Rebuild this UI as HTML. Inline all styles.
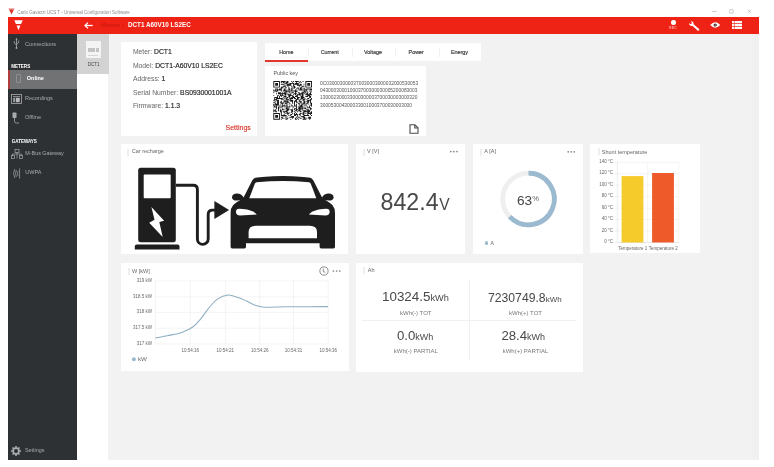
<!DOCTYPE html>
<html><head><meta charset="utf-8">
<style>
*{margin:0;padding:0;box-sizing:border-box}
html,body{width:774px;height:467px;overflow:hidden;background:#fff;font-family:"Liberation Sans",sans-serif}
body{filter:blur(0.25px)}
.a{position:absolute}
.t{position:absolute;white-space:nowrap;line-height:1}
#hdr{left:8px;top:17px;width:751px;height:17px;background:#ee2215}
#side{left:8px;top:34px;width:69px;height:426px;background:#2e3134}
#main{left:108px;top:34px;width:651px;height:426px;background:#f2f2f2}
.card{position:absolute;background:#fff}
.st{color:#a9abad}
.hd{color:#fff;font-weight:bold}
.ttl{font-size:5.5px;color:#666}
.bar{position:absolute;width:2px;height:7px;background:#eeeeee}
.mi{font-size:6.8px;color:#666}
.mi b{color:#1e1e1e;font-weight:normal;-webkit-text-stroke:0.15px #1e1e1e}
.tab{top:50px;width:43.3px;text-align:center;font-size:5.4px;color:#333;-webkit-text-stroke:0.15px #333}
.hex{font-size:5.6px;line-height:7.1px;color:#555;white-space:nowrap;transform:scaleX(0.87);transform-origin:0 0}
.dots{font-size:4.5px;color:#777;letter-spacing:-0.2px}
.big{color:#484848}
.lbl{font-size:6px;color:#777;width:112px;text-align:center}
.ax{font-size:4.5px;color:#666}
</style></head><body>
<!-- title bar -->
<svg class="a" style="left:8px;top:8px" width="7" height="7" viewBox="0 0 7 7"><path d="M0.5 0.5H6.5L3.5 6.5Z" fill="#d9362b"/><path d="M1 1H6" stroke="#fff" stroke-width="0.6"/></svg>
<div class="t" style="left:17.2px;top:10.6px;font-size:4.5px;color:#8c8c8c">Carlo Gavazzi UCS T - Universal Configuration Software</div>
<svg class="a" style="left:0;top:0" width="774" height="17" viewBox="0 0 774 17" fill="none" stroke="#a8a8a8" stroke-width="0.6"><path d="M712.3 11.5H716.7"/><rect x="729.6" y="9.6" width="3.6" height="3.6" rx="0.8"/><path d="M747.8 9.6L751.2 13M751.2 9.6L747.8 13"/></svg>
<div id="hdr" class="a"></div>
<div id="side" class="a"></div>
<div id="main" class="a"></div>
<div class="a" style="left:752.5px;top:34px;width:6.4px;height:426px;background:#f0f0f0"></div>


<!-- header content -->
<svg class="a" style="left:13.5px;top:19.8px" width="9" height="11" viewBox="0 0 9 11"><path d="M0.3 0.3H8.7L7.1 3.9H1.9Z" fill="#fff"/><path d="M2.6 5.6H6.4L4.5 10.3Z" fill="#fff"/></svg>
<svg class="a" style="left:83.5px;top:22px" width="9" height="7" viewBox="0 0 9 7" fill="none" stroke="#fff" stroke-width="1.3"><path d="M8.7 3.5H1.2"/><path d="M4 0.6L1 3.5L4 6.4"/></svg>
<div class="t" style="left:101px;top:22.3px;font-size:6.2px;color:#c4170f">Meters</div>
<div class="t" style="left:122.5px;top:22.3px;font-size:6.2px;color:#c4170f">/</div>
<div class="t hd" style="left:128px;top:22.3px;font-size:6.3px">DCT1 A60V10 LS2EC</div>
<div class="a" style="left:671.2px;top:20.4px;width:4.4px;height:4.4px;border-radius:50%;background:#fff"></div>
<div class="t" style="left:669px;top:26.9px;font-size:3.5px;color:#f7a49d;font-weight:bold;letter-spacing:0.15px">REC</div>
<svg class="a" style="left:688px;top:20.5px" width="12" height="10" viewBox="0 0 12 10"><path d="M1.2 1.6Q0.6 3.6 2.2 4.6Q3.2 5.1 4.3 4.7L9.6 9.4Q10.6 10 11.2 9.2Q11.6 8.4 10.8 7.8L5.6 3.3Q5.9 1.8 4.8 0.8Q3.8 0.1 2.6 0.3L3.9 1.8L3.2 3L1.9 2.9Z" fill="#fff"/></svg>
<svg class="a" style="left:710px;top:22.3px" width="10.4" height="6" viewBox="0 0 10.4 6"><path d="M0.2 3Q5.2 -2.4 10.2 3Q5.2 8.4 0.2 3Z" fill="#fff"/><circle cx="5.2" cy="3" r="1.6" fill="#3a1a17"/><circle cx="5.2" cy="3" r="0.6" fill="#fff"/></svg>
<svg class="a" style="left:731.8px;top:20.8px" width="10.6" height="8.4" viewBox="0 0 10.6 8.4" fill="#fff"><rect x="0" y="0" width="1.9" height="2.3"/><rect x="2.5" y="0" width="8.1" height="2.3"/><rect x="0" y="3" width="1.9" height="2.3"/><rect x="2.5" y="3" width="8.1" height="2.3"/><rect x="0" y="6" width="1.9" height="2.4"/><rect x="2.5" y="6" width="8.1" height="2.4"/></svg>
<!-- sidebar -->
<svg class="a" style="left:12px;top:38px" width="9" height="11" viewBox="0 0 9 11" fill="none" stroke="#a9abad" stroke-width="0.8"><path d="M4.5 1V10"/><path d="M2.3 3.2V5.2L4.5 7"/><path d="M6.7 2.5V4.6L4.5 6.2"/><circle cx="4.5" cy="10" r="0.7" fill="#a9abad"/><path d="M3.9 1.3L4.5 0.5L5.1 1.3Z" fill="#a9abad"/></svg>
<div class="t st" style="left:25px;top:41.6px;font-size:5.6px">Connections</div>
<div class="t hd" style="left:11.3px;top:65.4px;font-size:4.6px;letter-spacing:-0.05px">METERS</div>
<div class="a" style="left:8px;top:69.5px;width:69px;height:19.5px;background:#717273"></div>
<div class="a" style="left:8px;top:69.5px;width:1.7px;height:19.5px;background:#b03a3c"></div>
<div class="a" style="left:15.7px;top:74.4px;width:5.3px;height:9px;border:0.7px solid #8e8f91;border-radius:1px"></div>
<div class="t hd" style="left:26.8px;top:76.3px;font-size:5.5px">Online</div>
<svg class="a" style="left:11px;top:94px" width="11" height="10" viewBox="0 0 11 10" fill="none" stroke="#a9abad" stroke-width="0.8"><rect x="0.5" y="0.5" width="10" height="9"/><path d="M2 2.6H9"/><rect x="2.3" y="3.8" width="1.6" height="4.4" fill="#a9abad" stroke="none"/><rect x="4.8" y="3.8" width="3.9" height="4.4" fill="#b8babc" stroke="none"/></svg>
<div class="t st" style="left:25px;top:95.6px;font-size:5.5px">Recordings</div>
<svg class="a" style="left:11.4px;top:112.3px" width="9" height="12" viewBox="0 0 9 12" fill="#a9abad"><rect x="1.5" y="0.5" width="4" height="5.5" rx="0.8"/><path d="M3.5 6V9.5Q3.5 11 5.5 11H8" fill="none" stroke="#a9abad" stroke-width="0.8"/></svg>
<div class="t st" style="left:25px;top:115px;font-size:5.6px">Offline</div>
<div class="t hd" style="left:11.8px;top:140px;font-size:4.6px;letter-spacing:-0.08px">GATEWAYS</div>
<svg class="a" style="left:10.5px;top:148.5px" width="12" height="10" viewBox="0 0 12 10" fill="none" stroke="#a9abad" stroke-width="0.7"><rect x="4" y="0.5" width="4" height="3"/><path d="M6 3.5V5M1.5 6.5V5H10.5V6.5"/><rect x="0.5" y="6.5" width="3" height="3"/><rect x="8.5" y="6.5" width="3" height="3"/><path d="M6 5V9.5"/></svg>
<div class="t st" style="left:25.3px;top:150.6px;font-size:5.4px">M-Bus Gateway</div>
<svg class="a" style="left:12px;top:167.5px" width="9" height="11" viewBox="0 0 9 11" fill="none" stroke="#a9abad" stroke-width="0.7"><path d="M7.6 0.5V10.5"/><path d="M6 3.2Q4.9 5.5 6 7.8"/><path d="M4.4 2Q2.6 5.5 4.4 9"/><path d="M2.8 1Q0.2 5.5 2.8 10"/></svg>
<div class="t st" style="left:25.3px;top:170px;font-size:5.5px">UWPA</div>
<svg class="a" style="left:11.3px;top:445.8px" width="10" height="10" viewBox="0 0 10 10"><g fill="#a9abad"><circle cx="5" cy="5" r="3.7"/><rect x="4.25" y="0" width="1.5" height="2" transform="rotate(0 5 5)"/><rect x="4.25" y="0" width="1.5" height="2" transform="rotate(45 5 5)"/><rect x="4.25" y="0" width="1.5" height="2" transform="rotate(90 5 5)"/><rect x="4.25" y="0" width="1.5" height="2" transform="rotate(135 5 5)"/><rect x="4.25" y="0" width="1.5" height="2" transform="rotate(180 5 5)"/><rect x="4.25" y="0" width="1.5" height="2" transform="rotate(225 5 5)"/><rect x="4.25" y="0" width="1.5" height="2" transform="rotate(270 5 5)"/><rect x="4.25" y="0" width="1.5" height="2" transform="rotate(315 5 5)"/></g><circle cx="5" cy="5" r="2.1" fill="#2e3134"/></svg>
<div class="t st" style="left:25px;top:448px;font-size:5.4px">Settings</div>
<!-- dct tile -->
<div class="a" style="left:77px;top:34px;width:31.5px;height:40px;background:#d3d3d3"></div>
<div class="a" style="left:85.5px;top:41.2px;width:15.5px;height:16.8px;background:#f4f4f4"></div>
<div class="a" style="left:87.5px;top:48px;width:7px;height:4px;background:#c3c3c3"></div>
<div class="a" style="left:95.5px;top:48px;width:3.5px;height:4px;background:#c3c3c3"></div>
<div class="a" style="left:88px;top:55px;width:10px;height:0.6px;background:#d6d6d6"></div>
<div class="t" style="left:87.8px;top:62.6px;font-size:4.5px;color:#444">DCT1</div>

<!-- meter card -->
<div class="card" style="left:120.6px;top:42.2px;width:136.7px;height:93.6px"></div>
<div class="t mi" style="left:132.9px;top:48.9px">Meter: <b>DCT1</b></div>
<div class="t mi" style="left:132.9px;top:62.5px">Model: <b>DCT1-A60V10 LS2EC</b></div>
<div class="t mi" style="left:132.9px;top:76.2px">Address: <b>1</b></div>
<div class="t mi" style="left:132.9px;top:89.6px">Serial Number: <b>BS0930001001A</b></div>
<div class="t mi" style="left:132.9px;top:103.1px">Firmware: <b>1.1.3</b></div>
<div class="t" style="left:225.5px;top:124.2px;font-size:7px;color:#d8281f;-webkit-text-stroke:0.1px #d8281f">Settings</div>
<!-- tabs -->
<div class="card" style="left:264.7px;top:43.4px;width:216.5px;height:17.6px"></div>
<div class="a" style="left:265px;top:60px;width:43.4px;height:1.6px;background:#e3352c"></div>
<div class="a" style="left:308.3px;top:47.5px;width:0.6px;height:9px;background:#f1f1f1"></div>
<div class="a" style="left:351.6px;top:47.5px;width:0.6px;height:9px;background:#f1f1f1"></div>
<div class="a" style="left:395.3px;top:47.5px;width:0.6px;height:9px;background:#f1f1f1"></div>
<div class="a" style="left:438.6px;top:47.5px;width:0.6px;height:9px;background:#f1f1f1"></div>
<div class="t tab" style="left:264.7px">Home</div>
<div class="t tab" style="left:308.0px">Current</div>
<div class="t tab" style="left:351.3px">Voltage</div>
<div class="t tab" style="left:394.6px">Power</div>
<div class="t tab" style="left:437.9px">Energy</div>
<!-- public key -->
<div class="card" style="left:265.3px;top:65.7px;width:161.1px;height:69.9px"></div>
<div class="t" style="left:273.4px;top:71.2px;font-size:5.4px;color:#555">Public key</div>
<svg class="a" style="left:273px;top:81px" width="39.3" height="38.7" viewBox="0 0 41 41"><path d="M0 0h7v1h-7zM8 0h5v1h-5zM14 0h2v1h-2zM19 0h1v1h-1zM21 0h1v1h-1zM23 0h4v1h-4zM28 0h1v1h-1zM31 0h1v1h-1zM34 0h7v1h-7zM0 1h1v1h-1zM6 1h1v1h-1zM8 1h1v1h-1zM10 1h2v1h-2zM13 1h3v1h-3zM20 1h1v1h-1zM24 1h1v1h-1zM27 1h1v1h-1zM29 1h1v1h-1zM34 1h1v1h-1zM40 1h1v1h-1zM0 2h1v1h-1zM2 2h3v1h-3zM6 2h1v1h-1zM12 2h3v1h-3zM17 2h5v1h-5zM23 2h4v1h-4zM34 2h1v1h-1zM36 2h3v1h-3zM40 2h1v1h-1zM0 3h1v1h-1zM2 3h3v1h-3zM6 3h1v1h-1zM8 3h4v1h-4zM14 3h5v1h-5zM21 3h6v1h-6zM28 3h2v1h-2zM32 3h1v1h-1zM34 3h1v1h-1zM36 3h3v1h-3zM40 3h1v1h-1zM0 4h1v1h-1zM2 4h3v1h-3zM6 4h1v1h-1zM12 4h1v1h-1zM14 4h5v1h-5zM21 4h1v1h-1zM25 4h5v1h-5zM34 4h1v1h-1zM36 4h3v1h-3zM40 4h1v1h-1zM0 5h1v1h-1zM6 5h1v1h-1zM10 5h3v1h-3zM15 5h1v1h-1zM19 5h1v1h-1zM21 5h2v1h-2zM27 5h1v1h-1zM30 5h3v1h-3zM34 5h1v1h-1zM40 5h1v1h-1zM0 6h7v1h-7zM8 6h3v1h-3zM12 6h2v1h-2zM16 6h1v1h-1zM20 6h1v1h-1zM22 6h2v1h-2zM29 6h1v1h-1zM34 6h7v1h-7zM8 7h2v1h-2zM13 7h1v1h-1zM16 7h1v1h-1zM19 7h1v1h-1zM21 7h2v1h-2zM25 7h2v1h-2zM28 7h3v1h-3zM32 7h1v1h-1zM2 8h3v1h-3zM6 8h3v1h-3zM11 8h2v1h-2zM16 8h2v1h-2zM19 8h2v1h-2zM24 8h1v1h-1zM26 8h1v1h-1zM28 8h2v1h-2zM32 8h2v1h-2zM35 8h6v1h-6zM0 9h1v1h-1zM2 9h1v1h-1zM4 9h5v1h-5zM11 9h2v1h-2zM14 9h1v1h-1zM16 9h2v1h-2zM19 9h1v1h-1zM23 9h1v1h-1zM27 9h5v1h-5zM33 9h3v1h-3zM39 9h2v1h-2zM0 10h5v1h-5zM8 10h1v1h-1zM10 10h5v1h-5zM16 10h1v1h-1zM18 10h8v1h-8zM32 10h2v1h-2zM35 10h1v1h-1zM38 10h1v1h-1zM3 11h1v1h-1zM13 11h5v1h-5zM23 11h2v1h-2zM30 11h1v1h-1zM32 11h3v1h-3zM36 11h1v1h-1zM39 11h2v1h-2zM0 12h1v1h-1zM5 12h3v1h-3zM9 12h1v1h-1zM11 12h3v1h-3zM17 12h1v1h-1zM19 12h3v1h-3zM23 12h1v1h-1zM26 12h2v1h-2zM30 12h3v1h-3zM34 12h1v1h-1zM36 12h1v1h-1zM39 12h1v1h-1zM3 13h1v1h-1zM5 13h9v1h-9zM15 13h1v1h-1zM18 13h1v1h-1zM22 13h3v1h-3zM27 13h5v1h-5zM33 13h1v1h-1zM35 13h2v1h-2zM38 13h2v1h-2zM7 14h1v1h-1zM9 14h1v1h-1zM12 14h2v1h-2zM15 14h4v1h-4zM21 14h1v1h-1zM23 14h1v1h-1zM25 14h4v1h-4zM30 14h2v1h-2zM34 14h7v1h-7zM0 15h1v1h-1zM4 15h2v1h-2zM7 15h4v1h-4zM12 15h1v1h-1zM16 15h5v1h-5zM24 15h2v1h-2zM28 15h1v1h-1zM30 15h2v1h-2zM36 15h3v1h-3zM4 16h1v1h-1zM6 16h1v1h-1zM8 16h1v1h-1zM11 16h3v1h-3zM16 16h2v1h-2zM20 16h2v1h-2zM23 16h3v1h-3zM29 16h3v1h-3zM34 16h3v1h-3zM38 16h2v1h-2zM1 17h4v1h-4zM6 17h1v1h-1zM10 17h1v1h-1zM12 17h1v1h-1zM14 17h2v1h-2zM17 17h1v1h-1zM19 17h4v1h-4zM25 17h3v1h-3zM29 17h4v1h-4zM38 17h2v1h-2zM1 18h1v1h-1zM3 18h7v1h-7zM11 18h1v1h-1zM13 18h2v1h-2zM17 18h4v1h-4zM22 18h2v1h-2zM25 18h2v1h-2zM29 18h3v1h-3zM33 18h1v1h-1zM36 18h2v1h-2zM40 18h1v1h-1zM1 19h3v1h-3zM8 19h3v1h-3zM13 19h4v1h-4zM18 19h1v1h-1zM24 19h3v1h-3zM28 19h2v1h-2zM31 19h3v1h-3zM35 19h1v1h-1zM39 19h2v1h-2zM0 20h2v1h-2zM3 20h3v1h-3zM11 20h1v1h-1zM13 20h1v1h-1zM15 20h1v1h-1zM17 20h4v1h-4zM23 20h2v1h-2zM27 20h1v1h-1zM31 20h2v1h-2zM36 20h4v1h-4zM2 21h1v1h-1zM4 21h2v1h-2zM8 21h1v1h-1zM11 21h5v1h-5zM18 21h3v1h-3zM22 21h3v1h-3zM27 21h3v1h-3zM32 21h2v1h-2zM35 21h3v1h-3zM39 21h1v1h-1zM0 22h2v1h-2zM4 22h2v1h-2zM7 22h2v1h-2zM10 22h1v1h-1zM12 22h1v1h-1zM14 22h3v1h-3zM20 22h1v1h-1zM22 22h1v1h-1zM24 22h2v1h-2zM28 22h2v1h-2zM32 22h2v1h-2zM36 22h2v1h-2zM39 22h1v1h-1zM2 23h1v1h-1zM4 23h2v1h-2zM8 23h3v1h-3zM12 23h3v1h-3zM17 23h1v1h-1zM20 23h1v1h-1zM22 23h1v1h-1zM26 23h2v1h-2zM29 23h1v1h-1zM31 23h3v1h-3zM35 23h2v1h-2zM39 23h2v1h-2zM0 24h6v1h-6zM7 24h1v1h-1zM9 24h1v1h-1zM13 24h1v1h-1zM15 24h1v1h-1zM17 24h1v1h-1zM22 24h1v1h-1zM24 24h1v1h-1zM27 24h1v1h-1zM30 24h2v1h-2zM33 24h1v1h-1zM35 24h1v1h-1zM37 24h1v1h-1zM40 24h1v1h-1zM0 25h1v1h-1zM2 25h4v1h-4zM9 25h1v1h-1zM11 25h1v1h-1zM14 25h1v1h-1zM19 25h1v1h-1zM22 25h1v1h-1zM24 25h1v1h-1zM27 25h1v1h-1zM29 25h2v1h-2zM32 25h1v1h-1zM34 25h1v1h-1zM39 25h2v1h-2zM0 26h2v1h-2zM3 26h1v1h-1zM6 26h2v1h-2zM9 26h6v1h-6zM17 26h1v1h-1zM19 26h2v1h-2zM22 26h3v1h-3zM28 26h3v1h-3zM33 26h1v1h-1zM35 26h1v1h-1zM38 26h1v1h-1zM40 26h1v1h-1zM1 27h3v1h-3zM5 27h1v1h-1zM8 27h2v1h-2zM14 27h4v1h-4zM21 27h1v1h-1zM24 27h1v1h-1zM26 27h6v1h-6zM36 27h1v1h-1zM38 27h1v1h-1zM0 28h1v1h-1zM3 28h1v1h-1zM5 28h3v1h-3zM11 28h1v1h-1zM13 28h2v1h-2zM20 28h1v1h-1zM24 28h1v1h-1zM27 28h2v1h-2zM30 28h1v1h-1zM32 28h3v1h-3zM36 28h4v1h-4zM3 29h1v1h-1zM5 29h1v1h-1zM9 29h1v1h-1zM13 29h4v1h-4zM22 29h3v1h-3zM26 29h6v1h-6zM33 29h2v1h-2zM39 29h2v1h-2zM0 30h1v1h-1zM2 30h1v1h-1zM5 30h1v1h-1zM7 30h1v1h-1zM9 30h3v1h-3zM14 30h3v1h-3zM18 30h3v1h-3zM22 30h1v1h-1zM24 30h2v1h-2zM27 30h2v1h-2zM30 30h1v1h-1zM35 30h3v1h-3zM39 30h1v1h-1zM0 31h3v1h-3zM5 31h1v1h-1zM7 31h2v1h-2zM13 31h3v1h-3zM19 31h2v1h-2zM23 31h2v1h-2zM26 31h3v1h-3zM31 31h4v1h-4zM36 31h3v1h-3zM0 32h1v1h-1zM2 32h2v1h-2zM7 32h2v1h-2zM10 32h5v1h-5zM19 32h2v1h-2zM22 32h1v1h-1zM25 32h1v1h-1zM28 32h2v1h-2zM32 32h7v1h-7zM40 32h1v1h-1zM8 33h1v1h-1zM11 33h1v1h-1zM14 33h2v1h-2zM17 33h1v1h-1zM19 33h1v1h-1zM23 33h1v1h-1zM31 33h2v1h-2zM36 33h2v1h-2zM39 33h2v1h-2zM0 34h7v1h-7zM8 34h1v1h-1zM12 34h1v1h-1zM14 34h3v1h-3zM20 34h1v1h-1zM22 34h1v1h-1zM24 34h1v1h-1zM28 34h2v1h-2zM31 34h2v1h-2zM34 34h1v1h-1zM36 34h5v1h-5zM0 35h1v1h-1zM6 35h1v1h-1zM8 35h1v1h-1zM11 35h1v1h-1zM15 35h1v1h-1zM18 35h2v1h-2zM22 35h4v1h-4zM27 35h2v1h-2zM31 35h2v1h-2zM36 35h1v1h-1zM39 35h1v1h-1zM0 36h1v1h-1zM2 36h3v1h-3zM6 36h1v1h-1zM8 36h6v1h-6zM16 36h1v1h-1zM18 36h1v1h-1zM22 36h2v1h-2zM25 36h1v1h-1zM28 36h1v1h-1zM32 36h6v1h-6zM40 36h1v1h-1zM0 37h1v1h-1zM2 37h3v1h-3zM6 37h1v1h-1zM10 37h1v1h-1zM12 37h1v1h-1zM14 37h1v1h-1zM19 37h3v1h-3zM25 37h1v1h-1zM29 37h4v1h-4zM0 38h1v1h-1zM2 38h3v1h-3zM6 38h1v1h-1zM8 38h2v1h-2zM13 38h1v1h-1zM17 38h5v1h-5zM24 38h1v1h-1zM26 38h2v1h-2zM31 38h3v1h-3zM37 38h3v1h-3zM0 39h1v1h-1zM6 39h1v1h-1zM9 39h2v1h-2zM12 39h1v1h-1zM14 39h2v1h-2zM20 39h1v1h-1zM23 39h1v1h-1zM25 39h1v1h-1zM28 39h2v1h-2zM32 39h2v1h-2zM35 39h1v1h-1zM37 39h3v1h-3zM0 40h7v1h-7zM8 40h1v1h-1zM13 40h2v1h-2zM18 40h1v1h-1zM23 40h2v1h-2zM26 40h1v1h-1zM31 40h4v1h-4zM38 40h1v1h-1z" fill="#1a1a1a"/></svg>
<div class="a hex" style="left:320.3px;top:80.3px">0C0300030000370030003000032000530053<br>043000300010003700300030005200083003<br>130002300033000300003700030003000320<br>3000530043000330010003700030003000</div>
<svg class="a" style="left:409px;top:124px" width="10" height="10" viewBox="0 0 10 10" fill="none" stroke="#4a4a4a" stroke-width="1.1"><path d="M1 0.8H5.8L9 3.8V9.2H1Z"/><path d="M5.8 1V4H8.8"/></svg>

<!-- row 2 cards -->
<div class="card" style="left:120.7px;top:143.7px;width:227.4px;height:110.8px"></div>
<div class="card" style="left:356.1px;top:143.6px;width:109.2px;height:110.7px"></div>
<div class="card" style="left:472.8px;top:143.6px;width:110.1px;height:110.7px"></div>
<div class="card" style="left:590.2px;top:143.6px;width:109.9px;height:109.4px"></div>
<!-- row 3 cards -->
<div class="card" style="left:120.7px;top:262.7px;width:227.9px;height:108.6px"></div>
<div class="card" style="left:356.2px;top:262.7px;width:227px;height:109.4px"></div>

<svg class="a" style="left:0;top:0" width="774" height="467" viewBox="0 0 774 467">
<!-- charger -->
<g fill="#1e1e1e">
<rect x="138.2" y="167.7" width="37.6" height="74.6" rx="2.5"/>
<path d="M134.8 249.5V246.4Q134.8 244.4 136.8 244.4H177.5Q179.5 244.4 179.5 246.4V249.5Z"/>
<path d="M214.4 201.1L229.1 210.1L214.4 218.9Z"/>
</g>
<rect x="143.7" y="174.6" width="27" height="23.6" rx="1" fill="#fff"/>
<path d="M151.4 206.9L164.1 220.7L159.3 222L162.7 237.1L149.2 222.7L154.5 219.8Z" fill="#fff"/>
<path d="M175.8 185.2H193.2Q197.4 185.2 197.4 189.4V239A5.4 5.4 0 0 0 208.2 239V214.4Q208.2 210.1 212.5 210.1H215" fill="none" stroke="#1e1e1e" stroke-width="2.9"/>
<!-- car -->
<path fill="#1e1e1e" d="M282.8 176.0 Q262 176.5 255.4 177.8 Q253.4 178.3 252.2 180.4 L244.2 196.2 Q243.4 198 241.2 199.4 Q235.6 202.4 233.2 205 Q230.6 208 230.6 213 V246.8 Q230.6 248.4 232.2 248.4 H244.4 Q246 248.4 246 246.8 V243.2 H319.6 V246.8 Q319.6 248.4 321.2 248.4 H333.4 Q335 248.4 335 246.8 V213 Q335 208 332.4 205 Q330 202.4 324.4 199.4 Q322.2 198 321.4 196.2 L313.4 180.4 Q312.2 178.3 310.2 177.8 Q303.6 176.5 282.8 176.0 Z"/>
<path fill="#1e1e1e" d="M243.6 197.4 Q241.5 193.6 237 193.6 Q232.4 193.8 232 197.2 Q232.2 200.6 236.6 200.6 Q240.6 200.4 243.6 199.2Z"/>
<path fill="#1e1e1e" d="M322 197.4 Q324.1 193.6 328.6 193.6 Q333.2 193.8 333.6 197.2 Q333.4 200.6 329 200.6 Q325 200.4 322 199.2Z"/>
<path fill="#fff" d="M256.6 182.2 Q282.8 179.6 309 182.2 Q310.2 182.4 310.8 183.8 L316.3 198.3 H249.3 L254.8 183.8 Q255.4 182.4 256.6 182.2Z"/>
<path fill="#fff" d="M237.4 209 Q235.6 210 236 212.4 Q236.6 215.4 240 215.5 L256.8 214.6 Q254 211.2 247 209.6 Q240 208.4 237.4 209Z"/>
<path fill="#fff" d="M328.2 209 Q330 210 329.6 212.4 Q329 215.4 325.6 215.5 L308.8 214.6 Q311.6 211.2 318.6 209.6 Q325.6 208.4 328.2 209Z"/>
<path fill="#fff" d="M248.6 238.2 V232 Q248.6 225.8 256 225.8 H309.6 Q317 225.8 317 232 V238.2 Z"/>
<!-- donut -->
<circle cx="528.5" cy="199.0" r="25.8" fill="none" stroke="#efefef" stroke-width="4.8"/>
<path d="M528.50 173.20A25.8 25.8 0 1 1 509.69 216.66" fill="none" stroke="#9bbad0" stroke-width="4.8"/>
</svg>
<!-- titles -->
<div class="bar" style="left:127.3px;top:148.6px"></div>
<div class="t ttl" style="left:131.8px;top:149.2px">Car recharge</div>
<div class="bar" style="left:362.5px;top:148.6px"></div>
<div class="t ttl" style="left:367px;top:149.2px">V [V]</div>
<div class="bar" style="left:479.5px;top:148.6px"></div>
<div class="t ttl" style="left:484.3px;top:149.2px">A [A]</div>
<div class="bar" style="left:598px;top:148.3px"></div>
<div class="t ttl" style="left:601.8px;top:149.6px">Shunt temperature</div>
<div class="bar" style="left:127.8px;top:267.8px"></div>
<div class="t ttl" style="left:132px;top:268.5px">W [kW]</div>
<div class="bar" style="left:362.8px;top:266.8px"></div>
<div class="t ttl" style="left:367.8px;top:267.6px">Ah</div>
<svg class="a" style="left:0;top:0" width="774" height="467" viewBox="0 0 774 467"><g fill="#808080"><circle cx="450.8" cy="151.6" r="0.85"/><circle cx="453.9" cy="151.6" r="0.85"/><circle cx="457.0" cy="151.6" r="0.85"/><circle cx="568.2" cy="151.8" r="0.85"/><circle cx="571.1" cy="151.8" r="0.85"/><circle cx="574.2" cy="151.8" r="0.85"/><circle cx="333.4" cy="271.0" r="0.85"/><circle cx="336.6" cy="271.0" r="0.85"/><circle cx="339.8" cy="271.0" r="0.85"/></g></svg>
<!-- V value -->
<div class="t" style="left:380.5px;top:190.5px;font-size:23.2px;color:#484848">842.4<span style="font-size:15.6px;margin-left:0.8px">V</span></div>
<!-- A donut -->
<div class="t" style="left:517px;top:194.2px;font-size:13.6px;color:#444">63<span style="font-size:7.6px;vertical-align:3.8px;color:#666">%</span></div>
<div class="a" style="left:484.6px;top:241px;width:3.6px;height:3.6px;border-radius:50%;background:#9bbad0"></div>
<div class="t" style="left:490.6px;top:240.5px;font-size:5px;color:#666">A</div>
<!-- Wh -->
<div class="t big" style="left:382px;top:290px;font-size:13.4px">10324.5<span class="u" style="font-size:9.2px">kWh</span></div>
<div class="t lbl" style="left:359.8px;top:310px">kWh(-) TOT</div>
<div class="t big" style="left:488px;top:292px;font-size:12.2px">7230749.8<span class="u" style="font-size:8.0px">kWh</span></div>
<div class="t lbl" style="left:469.5px;top:310px">kWh(+) TOT</div>
<div class="t big" style="left:397px;top:329.3px;font-size:13.2px">0.0<span class="u" style="font-size:9px">kWh</span></div>
<div class="t lbl" style="left:359.8px;top:348.2px">kWh(-) PARTIAL</div>
<div class="t big" style="left:501.4px;top:329.3px;font-size:13.2px">28.4<span class="u" style="font-size:9px">kWh</span></div>
<div class="t lbl" style="left:469.5px;top:348.2px">kWh(+) PARTIAL</div>
<div class="a" style="left:469.2px;top:279.7px;width:0.6px;height:80px;background:#f0f0f0"></div>
<div class="a" style="left:362.4px;top:320.3px;width:214px;height:0.6px;background:#f0f0f0"></div>
<svg class="a" style="left:0;top:0" width="774" height="467" viewBox="0 0 774 467"><path d="M613.6 242.45H678.7" stroke="#ececec" stroke-width="0.6"/><path d="M613.6 231.00H678.7" stroke="#ececec" stroke-width="0.6"/><path d="M613.6 219.55H678.7" stroke="#ececec" stroke-width="0.6"/><path d="M613.6 208.10H678.7" stroke="#ececec" stroke-width="0.6"/><path d="M613.6 196.65H678.7" stroke="#ececec" stroke-width="0.6"/><path d="M613.6 185.20H678.7" stroke="#ececec" stroke-width="0.6"/><path d="M613.6 173.75H678.7" stroke="#ececec" stroke-width="0.6"/><path d="M613.6 162.30H678.7" stroke="#ececec" stroke-width="0.6"/><path d="M647.4 162.3V242.45M678.7 162.3V242.45" stroke="#f0f0f0" stroke-width="0.6"/><path d="M617.3 162.3V242.45" stroke="#dcdfe6" stroke-width="0.6"/><path d="M617.3 242.45H678.7" stroke="#dcdfe6" stroke-width="0.6"/><rect x="621.6" y="176.10" width="21.8" height="66.35" fill="#f5cb2b"/><rect x="652.1" y="173.01" width="21.8" height="69.44" fill="#ee5a2a"/><path d="M155.3 280.8H328.3" stroke="#ececec" stroke-width="0.6"/><path d="M155.3 296.9H328.3" stroke="#ececec" stroke-width="0.6"/><path d="M155.3 312.3H328.3" stroke="#ececec" stroke-width="0.6"/><path d="M155.3 328.2H328.3" stroke="#ececec" stroke-width="0.6"/><path d="M155.3 344.0H328.3" stroke="#ececec" stroke-width="0.6"/><path d="M155.3 280.8V344" stroke="#ececec" stroke-width="0.6"/><path d="M190.3 280.8V344" stroke="#ececec" stroke-width="0.6"/><path d="M225.3 280.8V344" stroke="#ececec" stroke-width="0.6"/><path d="M259.7 280.8V344" stroke="#ececec" stroke-width="0.6"/><path d="M293.5 280.8V344" stroke="#ececec" stroke-width="0.6"/><path d="M328.2 280.8V344" stroke="#ececec" stroke-width="0.6"/><path d="M155.3 338.1 C157.42 337.68 163.58 336.55 168 335.6 C172.42 334.65 177.67 333.83 181.8 332.4 C185.93 330.97 189.68 329.20 192.8 327.0 C195.92 324.80 197.93 322.23 200.5 319.2 C203.07 316.17 205.43 312.10 208.2 308.8 C210.97 305.50 213.78 301.68 217.1 299.4 C220.42 297.12 224.62 295.40 228.1 295.1 C231.58 294.80 234.93 296.62 238 297.6 C241.07 298.58 243.50 299.67 246.5 301.0 C249.50 302.33 253.07 304.57 256 305.6 C258.93 306.63 260.93 306.95 264.1 307.2 C267.27 307.45 271.32 307.17 275 307.1 C278.68 307.03 277.35 306.88 286.2 306.8 C295.05 306.72 321.12 306.63 328.1 306.6" fill="none" stroke="#8eafc2" stroke-width="1.05"/><circle cx="133.9" cy="359.2" r="2" fill="#9bbad0"/><circle cx="324" cy="271" r="4.1" fill="none" stroke="#6a6a6a" stroke-width="0.75"/><path d="M323.3 268.6V271.7L325.4 272.3" fill="none" stroke="#6a6a6a" stroke-width="0.75"/></svg>
<div class="t ax" style="left:593px;width:20px;text-align:right;top:240.15px">0 °C</div>
<div class="t ax" style="left:593px;width:20px;text-align:right;top:228.70px">20 °C</div>
<div class="t ax" style="left:593px;width:20px;text-align:right;top:217.25px">40 °C</div>
<div class="t ax" style="left:593px;width:20px;text-align:right;top:205.80px">60 °C</div>
<div class="t ax" style="left:593px;width:20px;text-align:right;top:194.35px">80 °C</div>
<div class="t ax" style="left:593px;width:20px;text-align:right;top:182.90px">100 °C</div>
<div class="t ax" style="left:593px;width:20px;text-align:right;top:171.45px">120 °C</div>
<div class="t ax" style="left:593px;width:20px;text-align:right;top:160.00px">140 °C</div>
<div class="t ax" style="left:617.3px;width:30.7px;text-align:center;top:246.9px">Temperature 1</div>
<div class="t ax" style="left:648px;width:30.7px;text-align:center;top:246.9px">Temperature 2</div>
<div class="t ax" style="left:122px;width:30px;text-align:right;top:278.50px">319 kW</div>
<div class="t ax" style="left:122px;width:30px;text-align:right;top:294.60px">318.5 kW</div>
<div class="t ax" style="left:122px;width:30px;text-align:right;top:310.00px">318 kW</div>
<div class="t ax" style="left:122px;width:30px;text-align:right;top:325.90px">317.5 kW</div>
<div class="t ax" style="left:122px;width:30px;text-align:right;top:341.70px">317 kW</div>
<div class="t ax" style="left:175.30px;width:30px;text-align:center;top:349px">10:54:16</div>
<div class="t ax" style="left:210.30px;width:30px;text-align:center;top:349px">10:54:21</div>
<div class="t ax" style="left:244.70px;width:30px;text-align:center;top:349px">10:54:26</div>
<div class="t ax" style="left:278.50px;width:30px;text-align:center;top:349px">10:54:31</div>
<div class="t ax" style="left:313.20px;width:30px;text-align:center;top:349px">10:54:36</div>
<div class="t" style="left:137.9px;top:356.1px;font-size:6.2px;color:#666">kW</div>
</body></html>
